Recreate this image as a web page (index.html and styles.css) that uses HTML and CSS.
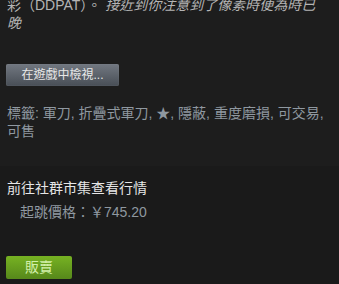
FILE: index.html
```html
<!DOCTYPE html>
<html lang="zh-Hant">
<head>
    <meta charset="UTF-8">
    <title>物品詳情</title>
    <link rel="stylesheet" href="styles.css">
</head>
<body>
<!-- DESCRIPCION -->
<div class="descriptores">
    <div class="descripcion">彩（DDPAT）。 <i>接近到你注意到了像素時便為時已晚</i></div>

    <div class="accion">
        <a class="btn_gris" href="#">在遊戲中檢視...</a>
    </div>

    <div class="etiquetas">標籤: 軍刀, 折疊式軍刀, ★, 隱蔽, 重度磨損, 可交易, 可售</div>
</div>

<!-- MERCADO -->
<div class="mercado">
    <div class="mercado_titulo">前往社群市集查看行情</div>
    <div class="precio">起跳價格：￥745.20</div>

    <a class="btn_verde" href="#">販賣</a>
</div>
</body>
</html>
```

FILE: styles.css
```css
body{
    margin: 0;
    background-color: #1d1d1d;
    font-family: "Liberation Sans", "Noto Sans CJK TC", sans-serif;
    font-size: 14px;
    overflow: hidden;
}

.descriptores{
    background-color: #1d1d1d;
    padding: 0 12px 0 7px;
    box-sizing: border-box;
    margin-top: -4px;
    height: 170px;
}

.descripcion{
    color: #b4b4b4;
    line-height: 18px;
}

.accion{
    margin-top: 32px;
    margin-left: -1px;
}

.btn_gris{
    display: inline-block;
    width: 113px;
    height: 22px;
    line-height: 22px;
    text-align: center;
    color: #e8e8e8;
    font-size: 12px;
    text-decoration: none;
    border-radius: 2px;
    background: linear-gradient(to bottom, #70767f 5%, #4a5058 95%);
    box-shadow: inset 0 0 1px rgba(255,255,255,0.3);
}

.etiquetas{
    margin-top: 18px;
    color: #8f98a0;
    line-height: 18px;
}

.mercado{
    background-color: #1a1a1a;
    padding: 13px 7px 0 7px;
    height: 118px;
}

.mercado_titulo{
    color: #e6e6e6;
    font-size: 14px;
    line-height: 18px;
}

.precio{
    color: #8f98a0;
    font-size: 14px;
    line-height: 18px;
    margin-top: 6px;
    margin-left: 13px;
}

.btn_verde{
    display: inline-block;
    margin-top: 35px;
    margin-left: -1px;
    width: 66px;
    height: 23px;
    line-height: 23px;
    text-align: center;
    color: #d2efa9;
    font-size: 14px;
    text-decoration: none;
    border-radius: 2px;
    background: linear-gradient(to bottom, #75b022 5%, #588a1b 95%);
}
```
